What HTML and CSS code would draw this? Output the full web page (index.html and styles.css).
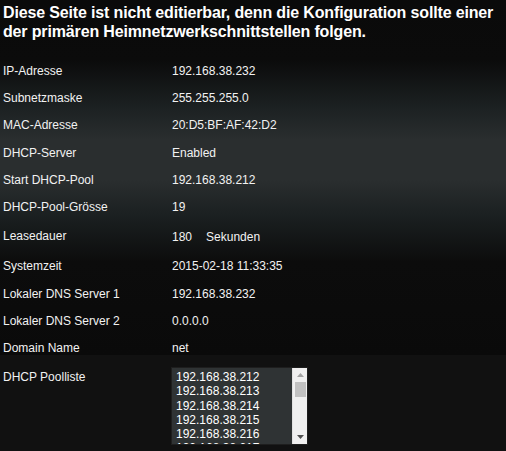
FILE: index.html
```html
<!DOCTYPE html>
<html lang="de">
<head>
    <meta charset="UTF-8">
    <meta name="viewport" content="width=device-width, initial-scale=1.0">
    <title>DHCP Einstellungen</title>
    <link rel="stylesheet" href="styles.css">
</head>
<body>
    <h1>Diese Seite ist nicht editierbar, denn die Konfiguration sollte einer der primären Heimnetzwerkschnittstellen folgen.</h1>

    <div class="settings">
        <div class="row"><span class="label">IP-Adresse</span><span class="value">192.168.38.232</span></div>
        <div class="row"><span class="label">Subnetzmaske</span><span class="value">255.255.255.0</span></div>
        <div class="row"><span class="label">MAC-Adresse</span><span class="value">20:D5:BF:AF:42:D2</span></div>
        <div class="row"><span class="label">DHCP-Server</span><span class="value">Enabled</span></div>
        <div class="row"><span class="label">Start DHCP-Pool</span><span class="value">192.168.38.212</span></div>
        <div class="row"><span class="label">DHCP-Pool-Grösse</span><span class="value">19</span></div>
        <div class="row row-lease"><span class="label">Leasedauer</span><span class="value">180<span class="unit">Sekunden</span></span></div>
        <div class="row"><span class="label">Systemzeit</span><span class="value">2015-02-18 11:33:35</span></div>
        <div class="row"><span class="label">Lokaler DNS Server 1</span><span class="value">192.168.38.232</span></div>
        <div class="row"><span class="label">Lokaler DNS Server 2</span><span class="value">0.0.0.0</span></div>
        <div class="row"><span class="label">Domain Name</span><span class="value">net</span></div>
        <div class="row row-pool">
            <span class="label">DHCP Poolliste</span>
            <div class="poollist">
                <div class="items">
                    <div>192.168.38.212</div>
                    <div>192.168.38.213</div>
                    <div>192.168.38.214</div>
                    <div>192.168.38.215</div>
                    <div>192.168.38.216</div>
                    <div>192.168.38.217</div>
                    <div>192.168.38.218</div>
                    <div>192.168.38.219</div>
                    <div>192.168.38.220</div>
                    <div>192.168.38.221</div>
                </div>
                <div class="scrollbar">
                    <div class="sb-btn">
                        <svg width="7" height="4" viewBox="0 0 7 4"><polygon points="3.5,0 7,4 0,4" fill="#a3a3a3"/></svg>
                    </div>
                    <div class="sb-thumb"></div>
                    <div class="sb-track"></div>
                    <div class="sb-btn">
                        <svg width="7" height="4" viewBox="0 0 7 4"><polygon points="0,0 7,0 3.5,4" fill="#505050"/></svg>
                    </div>
                </div>
            </div>
        </div>
    </div>
</body>
</html>
```

FILE: styles.css
```css
html {
    background: #111111;
}
body {
    margin: 0;
    padding: 3px 2px 3px 3px;
    min-height: 445px;
    font-family: "Liberation Sans", Arial, sans-serif;
    font-size: 12px;
    color: #f2f2f2;
    background: linear-gradient(to bottom,
        #0a0a0a 0px,
        #0b0b0b 60px,
        #1b2021 105px,
        #2a2e2f 140px,
        #2a2e2f 180px,
        #1b2021 215px,
        #0c0c0c 262px,
        #0a0a0a 355px) no-repeat top left / 100% 355px, #111111;
}
h1 {
    margin: 0 0 16px;
    font-size: 16px;
    line-height: 19px;
    font-weight: bold;
    letter-spacing: -0.15px;
    color: #ffffff;
}
.row {
    display: grid;
    grid-template-columns: 169px 1fr;
    align-items: center;
    height: 27.3px;
    line-height: 14px;
}
.row-lease {
    height: 32px;
}
.row-lease .label {
    padding-bottom: 2px;
}
.unit {
    margin-left: 14px;
}
.row-pool {
    height: auto;
    align-items: start;
    padding-top: 5px;
}
.row-pool .label {
    padding-top: 3px;
}
.poollist {
    display: flex;
    width: 137px;
    height: 78px;
    margin-left: -1px;
    box-sizing: border-box;
    border: 1px solid #1e1e1e;
    background: #2f3334;
}
.items {
    flex: 1;
    overflow: hidden;
    padding: 2px 0 0 4px;
    line-height: 14.3px;
    color: #ffffff;
}
.scrollbar {
    width: 14px;
    display: flex;
    flex-direction: column;
    background: #f0f0f0;
    border-left: 1px solid #e2e2e2;
}
.sb-btn {
    height: 14px;
    display: flex;
    align-items: center;
    justify-content: center;
}
.sb-thumb {
    width: 11px;
    height: 15px;
    margin: 0 auto;
    background: #c1c1c1;
}
.sb-track {
    flex: 1;
}
```
